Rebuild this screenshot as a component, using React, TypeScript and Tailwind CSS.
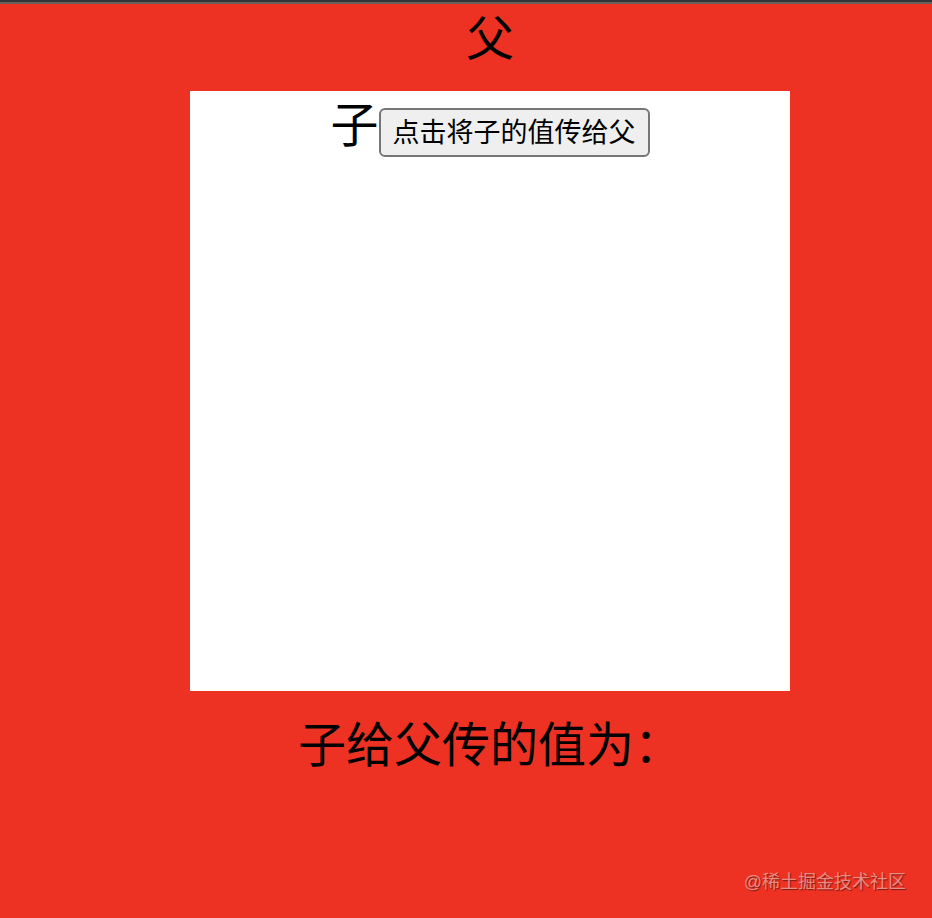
import { useState } from "react";

export default function App() {
  const [value, setValue] = useState("");
  return (
    <div className="flex min-h-screen flex-col bg-[#ed3224] font-['Liberation_Sans','Noto_Sans_CJK_SC',sans-serif] text-black">
      <div className="h-1 border-b-2 border-[#69605f] bg-[#333435]" />
      <main className="pl-12">
        <div className="pt-px text-center text-5xl leading-[70px]">父</div>
        <section className="mx-auto mt-4 flex h-[600px] w-[600px] items-start justify-center bg-white">
          <span className="text-5xl leading-[70px]">子</span>
          <button
            type="button"
            onClick={() => setValue("子")}
            className="mt-[17px] h-[49px] rounded-md border-2 border-[#767676] bg-[#efefef] px-3 text-[27px] leading-[42px]"
          >
            点击将子的值传给父
          </button>
        </section>
        <p className="mt-5 text-center text-5xl leading-[70px]">子给父传的值为：{value}</p>
      </main>
      <footer className="mt-auto pr-[26px] pb-6 text-right text-lg leading-6 text-[#eb8a80] [text-shadow:1px_1px_1px_#7a1a12]">
        @稀土掘金技术社区
      </footer>
    </div>
  );
}
